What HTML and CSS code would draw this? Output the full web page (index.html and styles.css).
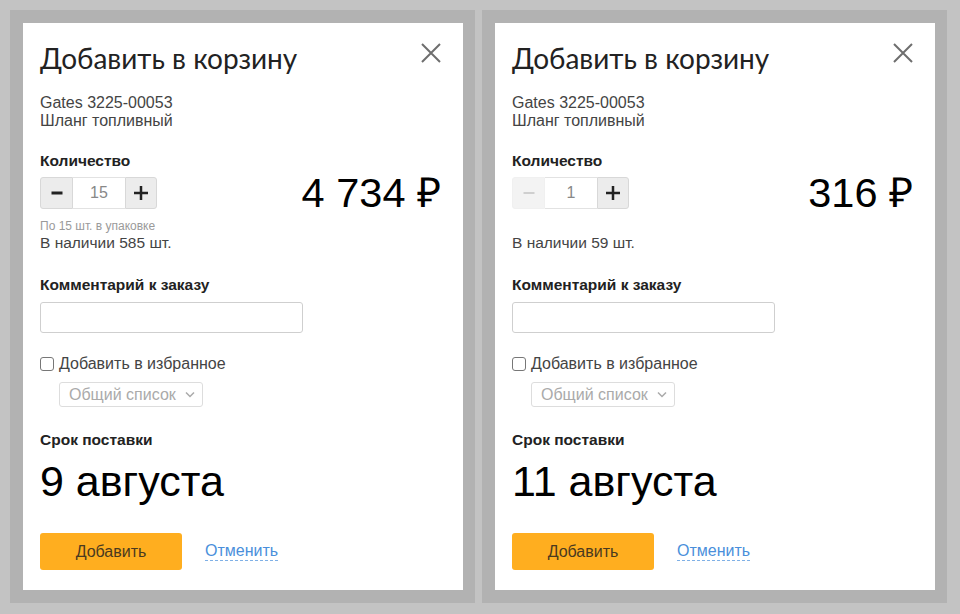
FILE: index.html
```html
<!DOCTYPE html>
<html lang="ru">
<head>
    <meta charset="UTF-8">
    <title>Добавить в корзину</title>
    <link rel="stylesheet" href="styles.css">
</head>
<body>
    <div class="wrap">
        <div class="frame">
            <div class="card">
                <div class="head">
                    <h1>Добавить в корзину</h1>
                    <svg class="close" width="20" height="20" viewBox="0 0 20 20"><path d="M1 1L19 19M19 1L1 19" stroke="#6e6e6e" stroke-width="2"/></svg>
                </div>
                <div class="info">Gates 3225-00053<br>Шланг топливный</div>
                <div class="label">Количество</div>
                <div class="qty-row">
                    <div class="qty-col">
                        <div class="stepper">
                            <span class="step">
                                <svg width="12" height="12" viewBox="0 0 12 12"><rect x="0.5" y="4.5" width="11" height="3" fill="#222"/></svg>
                            </span>
                            <span class="count">15</span>
                            <span class="step">
                                <svg width="14" height="14" viewBox="0 0 14 14"><rect x="0" y="5.75" width="14" height="2.5" fill="#222"/><rect x="5.75" y="0" width="2.5" height="14" fill="#222"/></svg>
                            </span>
                        </div>
                        <div class="pack">По 15 шт. в упаковке</div>
                        <div class="stock">В наличии 585 шт.</div>
                    </div>
                    <div class="price">4 734 ₽</div>
                </div>
                <div class="label comment-label">Комментарий к заказу</div>
                <input class="comment" type="text">
                <label class="fav"><input type="checkbox"> Добавить в избранное</label>
                <div class="select">
                    <span>Общий список</span>
                    <svg width="10" height="7" viewBox="0 0 10 7"><path d="M1 1.5L5 5.5L9 1.5" fill="none" stroke="#aaa" stroke-width="1.5"/></svg>
                </div>
                <div class="label term-label">Срок поставки</div>
                <div class="date">9 августа</div>
                <div class="actions">
                    <button class="add">Добавить</button>
                    <a class="cancel" href="#">Отменить</a>
                </div>
            </div>
        </div>

        <div class="frame">
            <div class="card">
                <div class="head">
                    <h1>Добавить в корзину</h1>
                    <svg class="close" width="20" height="20" viewBox="0 0 20 20"><path d="M1 1L19 19M19 1L1 19" stroke="#6e6e6e" stroke-width="2"/></svg>
                </div>
                <div class="info">Gates 3225-00053<br>Шланг топливный</div>
                <div class="label">Количество</div>
                <div class="qty-row">
                    <div class="qty-col">
                        <div class="stepper">
                            <span class="step disabled">
                                <svg width="12" height="12" viewBox="0 0 12 12"><rect x="0.5" y="5" width="11" height="2" fill="#cfcfcf"/></svg>
                            </span>
                            <span class="count">1</span>
                            <span class="step">
                                <svg width="14" height="14" viewBox="0 0 14 14"><rect x="0" y="5.75" width="14" height="2.5" fill="#222"/><rect x="5.75" y="0" width="2.5" height="14" fill="#222"/></svg>
                            </span>
                        </div>
                        <div class="pack"></div>
                        <div class="stock">В наличии 59 шт.</div>
                    </div>
                    <div class="price">316 ₽</div>
                </div>
                <div class="label comment-label">Комментарий к заказу</div>
                <input class="comment" type="text">
                <label class="fav"><input type="checkbox"> Добавить в избранное</label>
                <div class="select">
                    <span>Общий список</span>
                    <svg width="10" height="7" viewBox="0 0 10 7"><path d="M1 1.5L5 5.5L9 1.5" fill="none" stroke="#aaa" stroke-width="1.5"/></svg>
                </div>
                <div class="label term-label">Срок поставки</div>
                <div class="date">11 августа</div>
                <div class="actions">
                    <button class="add">Добавить</button>
                    <a class="cancel" href="#">Отменить</a>
                </div>
            </div>
        </div>
    </div>
</body>
</html>
```

FILE: styles.css
```css
body {
    margin: 0;
    background: #c3c3c3;
    font-family: 'Liberation Sans', Arial, sans-serif;
    color: #333;
}
.wrap {
    display: flex;
    gap: 7px;
    padding: 10px;
}
.frame {
    background: #b2b2b2;
    padding: 13px 12px 13px 13px;
}
.card {
    box-sizing: border-box;
    width: 440px;
    height: 567px;
    background: #fff;
    padding: 18px 22px 0 17px;
}
.head {
    display: flex;
    justify-content: space-between;
    align-items: flex-start;
}
h1 {
    margin: 0;
    font-family: Lato, 'Open Sans', sans-serif;
    font-weight: 400;
    font-size: 28px;
    line-height: 34px;
    color: #222;
}
.close {
    margin-top: 2px;
}
.info {
    margin-top: 19px;
    font-size: 16px;
    line-height: 18px;
    color: #444;
}
.label {
    margin-top: 22px;
    font-size: 15.5px;
    font-weight: 700;
    line-height: 18px;
    color: #222;
}
.qty-row {
    display: flex;
    justify-content: space-between;
    align-items: flex-start;
    margin-top: 7px;
}
.stepper {
    display: flex;
    height: 32px;
}
.step {
    box-sizing: border-box;
    width: 33px;
    display: flex;
    align-items: center;
    justify-content: center;
    background: #ececec;
    border: 1px solid #d8d8d8;
    border-radius: 3px 0 0 3px;
}
.step:last-child {
    width: 32px;
    border-radius: 0 3px 3px 0;
}
.step.disabled {
    background: #f3f3f3;
    border-color: #f0f0f0;
}
.count {
    box-sizing: border-box;
    width: 52px;
    display: flex;
    align-items: center;
    justify-content: center;
    border-top: 1px solid #e2e2e2;
    border-bottom: 1px solid #e2e2e2;
    font-size: 16px;
    color: #888;
}
.pack {
    height: 14px;
    margin-top: 10px;
    font-size: 12px;
    line-height: 14px;
    color: #9a9a9a;
}
.stock {
    margin-top: 1px;
    font-size: 15.5px;
    line-height: 18px;
    color: #444;
}
.price {
    font-size: 41.5px;
    line-height: 32px;
    color: #000;
}
.comment-label {
    margin-top: 24px;
}
.comment {
    display: block;
    box-sizing: border-box;
    width: 263px;
    height: 31px;
    margin: 8px 0 0;
    border: 1px solid #cfcfcf;
    border-radius: 3px;
}
.fav {
    display: flex;
    align-items: center;
    gap: 4px;
    margin-top: 22px;
    font-size: 16px;
    line-height: 18px;
    color: #444;
}
.fav input {
    appearance: none;
    width: 14px;
    height: 14px;
    margin: 0 1px 0 0;
    border: 1px solid #777;
    border-radius: 3px;
}
.select {
    box-sizing: border-box;
    width: 144px;
    height: 25px;
    margin: 9px 0 0 19px;
    padding: 0 7px 0 9px;
    display: flex;
    align-items: center;
    justify-content: space-between;
    border: 1px solid #ddd;
    border-radius: 3px;
    font-size: 16px;
    color: #aaa;
}
.term-label {
    margin-top: 24px;
}
.date {
    margin-top: 9px;
    font-size: 43px;
    line-height: 46px;
    color: #000;
}
.actions {
    display: flex;
    align-items: center;
    gap: 23px;
    margin-top: 29px;
}
.add {
    width: 142px;
    height: 37px;
    background: #ffae1f;
    border: none;
    border-radius: 3px;
    font-family: inherit;
    font-size: 16px;
    color: #4a3a1f;
}
.cancel {
    font-size: 16px;
    line-height: 18px;
    color: #4a8fdb;
    text-decoration: none;
    border-bottom: 1px dashed #7fb0e6;
}
```
